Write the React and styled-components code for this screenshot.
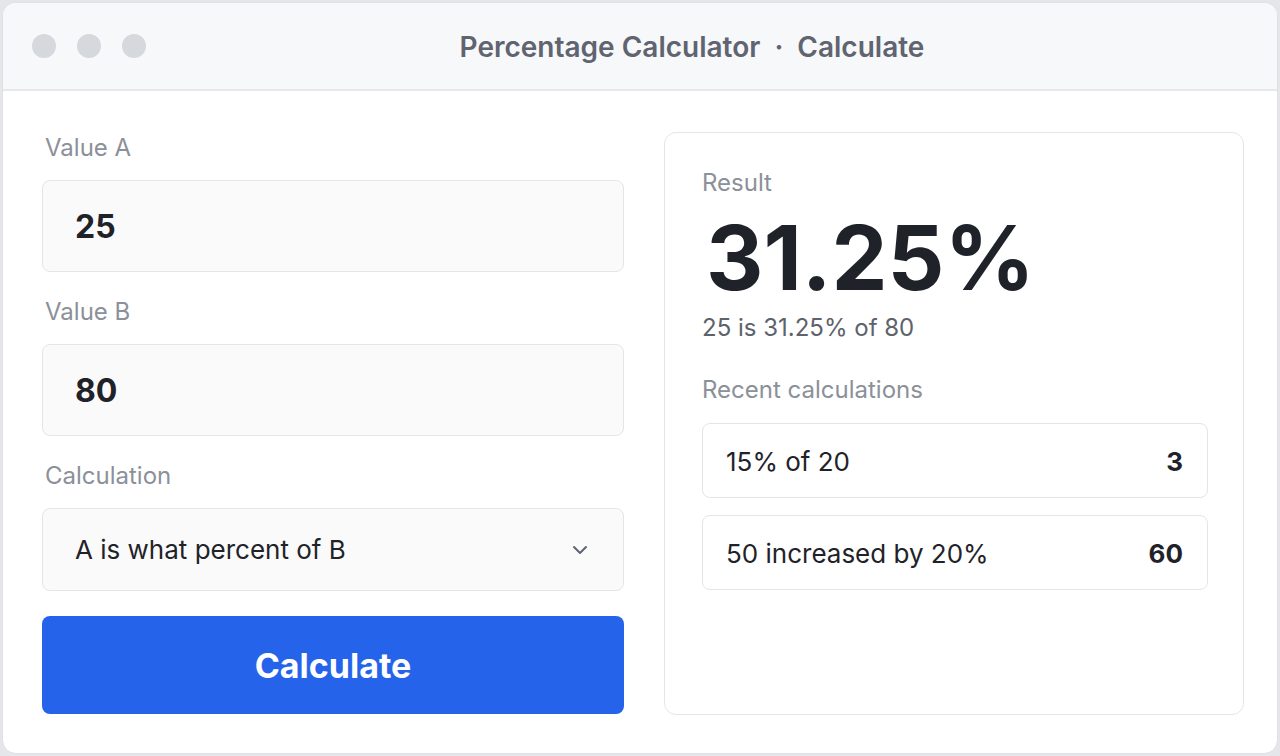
import React from "react";
import styled, { createGlobalStyle } from "styled-components";

const Global = createGlobalStyle`
  html, body { margin: 0; padding: 0; }
  body {
    background: #e4e6ea;
    font-family: Inter, "Noto Sans", sans-serif;
    -webkit-font-smoothing: antialiased;
  }
  * { box-sizing: border-box; }
`;

const Window = styled.div`
  margin: 2px;
  width: 1276px;
  height: 752px;
  background: #ffffff;
  border-radius: 14px;
  border: 1px solid #dfe1e5;
  overflow: hidden;
  display: flex;
  flex-direction: column;
`;

const TitleBar = styled.div`
  height: 88px;
  flex: none;
  background: #f7f8fa;
  border-bottom: 2px solid #e6e8eb;
  display: flex;
  align-items: center;
  position: relative;
  padding-left: 29px;
`;

const Dots = styled.div`
  display: flex;
  gap: 21px;
`;

const Dot = styled.span`
  width: 24px;
  height: 24px;
  border-radius: 50%;
  background: #d5d8dd;
`;

const Title = styled.div`
  position: absolute;
  left: 0;
  right: 0;
  display: flex;
  justify-content: center;
  gap: 14px;
  font-size: 28px;
  font-weight: 600;
  color: #5f6470;
  pointer-events: none;
  padding-left: 104px;
  padding-top: 2px;
`;

const Content = styled.div`
  flex: 1;
  display: grid;
  grid-template-columns: 582px 580px;
  column-gap: 40px;
  padding: 41px 32px 38px 39px;
`;

const Column = styled.div`
  display: flex;
  flex-direction: column;
`;

const Label = styled.div`
  font-size: 24px;
  line-height: 32px;
  color: #8b9099;
  padding-left: 3px;
  margin-bottom: 16px;
  margin-top: ${(p) => (p.$first ? "0" : "24px")};
`;

const Field = styled.div`
  height: ${(p) => p.$h}px;
  border: 1px solid #e3e5e8;
  border-radius: 8px;
  background: #fafafa;
  display: flex;
  align-items: center;
  justify-content: space-between;
  padding: 0 35px 0 32px;
  font-size: ${(p) => (p.$bold ? "32px" : "26px")};
  font-weight: ${(p) => (p.$bold ? 700 : 400)};
  color: #1f2329;
`;

const Button = styled.button`
  margin-top: 25px;
  height: 98px;
  border: none;
  border-radius: 8px;
  background: #2563eb;
  color: #ffffff;
  font-family: inherit;
  font-size: 34px;
  font-weight: 700;
`;

const Card = styled.div`
  border: 1px solid #e3e5e8;
  border-radius: 12px;
  padding: 34px 35px 0 37px;
  display: flex;
  flex-direction: column;
`;

const CardLabel = styled.div`
  font-size: 24px;
  line-height: 32px;
  color: #8b9099;
`;

const BigNumber = styled.div`
  font-size: 89px;
  line-height: 96px;
  font-weight: 700;
  color: #1f2329;
  margin-top: 11px;
  padding-left: 4px;
`;

const SubText = styled.div`
  font-size: 24px;
  line-height: 32px;
  color: #5d626b;
  margin-top: 6px;
`;

const RecentLabel = styled(CardLabel)`
  margin-top: 30px;
  margin-bottom: 17px;
`;

const List = styled.div`
  display: flex;
  flex-direction: column;
  gap: 17px;
`;

const Row = styled.div`
  height: 75px;
  border: 1px solid #e3e5e8;
  border-radius: 8px;
  display: flex;
  align-items: center;
  justify-content: space-between;
  padding: 2px 24px 0 23px;
  font-size: 26px;
  color: #1f2329;
`;

const RowValue = styled.span`
  font-weight: 700;
`;

const Chevron = () => (
  <svg width="16" height="10" viewBox="0 0 16 10" fill="none" stroke="#5f6470" strokeWidth="2" strokeLinecap="round" strokeLinejoin="round">
    <path d="M2 2l6 6 6-6" />
  </svg>
);

export default function App() {
  return (
    <>
      <Global />
      <Window>
        <TitleBar>
          <Dots>
            <Dot />
            <Dot />
            <Dot />
          </Dots>
          <Title>
            <span>Percentage Calculator</span>
            <span>·</span>
            <span>Calculate</span>
          </Title>
        </TitleBar>
        <Content>
          <Column>
            <Label $first>Value A</Label>
            <Field $h={92} $bold>25</Field>
            <Label>Value B</Label>
            <Field $h={92} $bold>80</Field>
            <Label>Calculation</Label>
            <Field $h={83}>
              <span>A is what percent of B</span>
              <Chevron />
            </Field>
            <Button>Calculate</Button>
          </Column>
          <Card>
            <CardLabel>Result</CardLabel>
            <BigNumber>31.25%</BigNumber>
            <SubText>25 is 31.25% of 80</SubText>
            <RecentLabel>Recent calculations</RecentLabel>
            <List>
              <Row>
                <span>15% of 20</span>
                <RowValue>3</RowValue>
              </Row>
              <Row>
                <span>50 increased by 20%</span>
                <RowValue>60</RowValue>
              </Row>
            </List>
          </Card>
        </Content>
      </Window>
    </>
  );
}
